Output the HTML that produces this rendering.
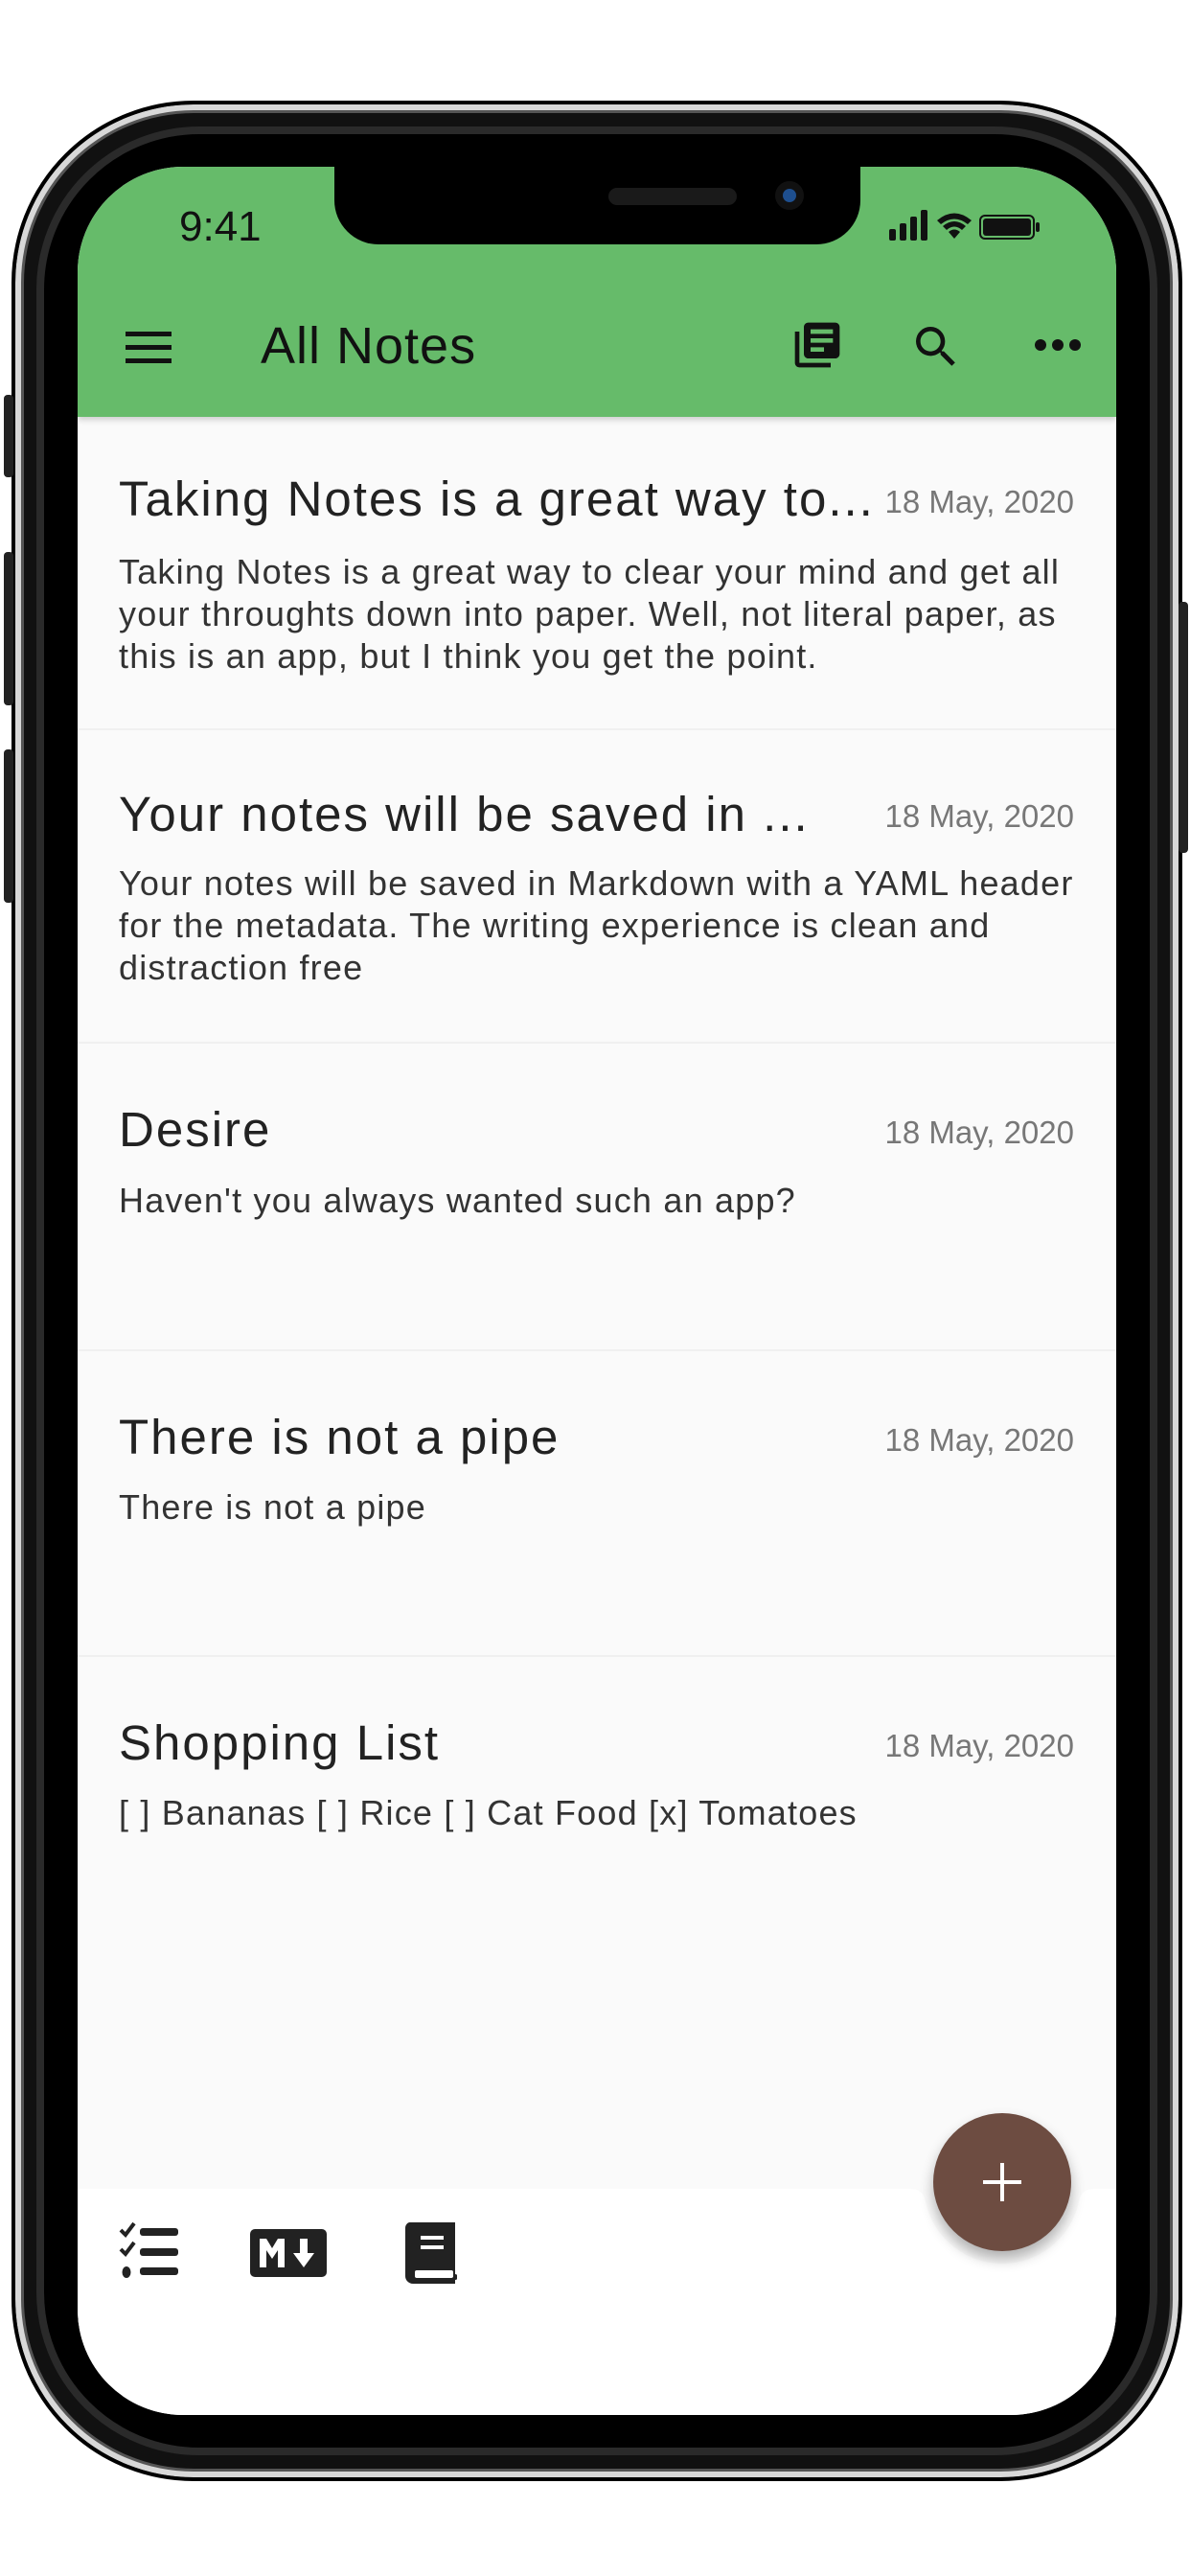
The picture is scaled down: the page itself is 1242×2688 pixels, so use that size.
<!DOCTYPE html>
<html><head><meta charset="utf-8"><style>
*{margin:0;padding:0;box-sizing:border-box}
body{width:1242px;height:2688px;background:#fff;position:relative;overflow:hidden;font-family:"Liberation Sans",sans-serif}
.abs{position:absolute}
.rim{left:12px;top:105px;width:1222px;height:2484px;border-radius:190px;background:#111;border:4px solid #000;box-shadow:inset 0 0 0 6px #d8d8d8,inset 0 0 0 9px #555}
.bez{left:38px;top:132px;width:1170px;height:2430px;border-radius:170px;background:#000;border:8px solid #2a2a2a}
.screen{left:81px;top:174px;width:1084px;height:2346px;border-radius:110px;background:#fafafa;overflow:hidden}
.bar{left:0;top:0;width:1084px;height:261px;background:#66bb6a;box-shadow:0 3px 6px rgba(0,0,0,.18)}
.notch{left:268px;top:0;width:549px;height:81px;background:#000;border-radius:0 0 46px 46px}
.item{left:0;width:1084px;border-bottom:2px solid #f0f0f0}
.t{position:absolute;left:43px;font-size:51px;letter-spacing:2px;color:#222;white-space:nowrap}
.d{position:absolute;right:44px;font-size:33px;color:#777;white-space:nowrap}
.b{position:absolute;left:43px;font-size:36px;letter-spacing:1.2px;color:#333;line-height:44px;white-space:nowrap}
.btn{background:#222;border-radius:4px}
</style></head><body>
<div class="abs rim"></div>
<div class="abs btn" style="left:4px;top:412px;width:10px;height:86px"></div>
<div class="abs btn" style="left:4px;top:576px;width:10px;height:160px"></div>
<div class="abs btn" style="left:4px;top:782px;width:10px;height:160px"></div>
<div class="abs btn" style="left:1230px;top:628px;width:10px;height:262px"></div>
<div class="abs bez"></div>
<div class="abs screen">
  <div class="abs bar"></div>
  <div class="abs notch">
    <div class="abs" style="left:286px;top:22px;width:134px;height:18px;border-radius:9px;background:#1a1a1a"></div>
    <div class="abs" style="left:460px;top:15px;width:30px;height:30px;border-radius:50%;background:#111"><div style="margin:8px;width:14px;height:14px;border-radius:50%;background:#1e4f8f"></div></div>
  </div>
  <div class="abs" style="left:106px;top:38px;font-size:44px;color:#111">9:41</div>
  <svg class="abs" style="left:845px;top:43px" width="180" height="36" viewBox="0 0 180 36">
    <rect x="2" y="22" width="7" height="12" rx="2" fill="#111"/><rect x="13" y="16" width="7" height="18" rx="2" fill="#111"/><rect x="24" y="9" width="7" height="25" rx="2" fill="#111"/><rect x="35" y="2" width="7" height="32" rx="2" fill="#111"/>
    <path d="M52 13 Q70 -2 88 13 L84 17 Q70 6 56 17Z M58 19 Q70 9 82 19 L78 23 Q70 16 62 23Z M64 25 Q70 20 76 25 L70 32Z" fill="#111"/>
    <rect x="97" y="8" width="56" height="24" rx="5" fill="none" stroke="#111" stroke-width="2"/><rect x="100" y="11" width="50" height="18" rx="3" fill="#111"/><rect x="155" y="15" width="4" height="10" rx="2" fill="#111"/>
  </svg>
  <svg class="abs" style="left:50px;top:170px" width="50" height="38"><rect y="2" width="48" height="5" fill="#111"/><rect y="16" width="48" height="5" fill="#111"/><rect y="30" width="48" height="5" fill="#111"/></svg>
  <div class="abs" style="left:191px;top:156px;font-size:54px;letter-spacing:1px;color:#111">All Notes</div>
  <svg class="abs" style="left:744px;top:158px" width="56" height="56" viewBox="0 0 24 24"><path fill="#111" d="M4 6H2v14c0 1.1.9 2 2 2h14v-2H4V6zm16-4H8c-1.1 0-2 .9-2 2v12c0 1.1.9 2 2 2h12c1.1 0 2-.9 2-2V4c0-1.1-.9-2-2-2zm-1 9H9V9h10v2zm-4 4H9v-2h6v2zm4-8H9V5h10v2z"/></svg>
  <svg class="abs" style="left:868px;top:160px" width="56" height="56" viewBox="0 0 24 24"><path fill="#111" d="M15.5 14h-.79l-.28-.27A6.47 6.47 0 0 0 16 9.5 6.5 6.5 0 1 0 9.5 16c1.61 0 3.09-.59 4.23-1.57l.27.28v.79l5 4.99L20.49 19l-4.99-5zm-6 0C7.01 14 5 11.990 5 9.5S7.01 5 9.5 5 14 7.01 14 9.5 11.99 14 9.5 14z"/></svg>
  <svg class="abs" style="left:999px;top:179px" width="48" height="14"><circle cx="6" cy="7" r="6" fill="#111"/><circle cx="24" cy="7" r="6" fill="#111"/><circle cx="42" cy="7" r="6" fill="#111"/></svg>

  <div class="abs item" style="top:261px;height:327px">
    <div class="t" style="top:56px">Taking Notes is a great way to...</div><div class="d" style="top:70px">18 May, 2020</div>
    <div class="b" style="top:140px">Taking Notes is a great way to clear your mind and get all<br>your throughts down into paper. Well, not literal paper, as<br>this is an app, but I think you get the point.</div>
  </div>
  <div class="abs item" style="top:588px;height:327px">
    <div class="t" style="top:58px">Your notes will be saved in ...</div><div class="d" style="top:71px">18 May, 2020</div>
    <div class="b" style="top:138px">Your notes will be saved in Markdown with a YAML header<br>for the metadata. The writing experience is clean and<br>distraction free</div>
  </div>
  <div class="abs item" style="top:915px;height:321px">
    <div class="t" style="top:60px">Desire</div><div class="d" style="top:74px">18 May, 2020</div>
    <div class="b" style="top:142px">Haven't you always wanted such an app?</div>
  </div>
  <div class="abs item" style="top:1236px;height:319px">
    <div class="t" style="top:60px">There is not a pipe</div><div class="d" style="top:74px">18 May, 2020</div>
    <div class="b" style="top:141px">There is not a pipe</div>
  </div>
  <div class="abs item" style="top:1555px;height:319px;border:none">
    <div class="t" style="top:60px">Shopping List</div><div class="d" style="top:74px">18 May, 2020</div>
    <div class="b" style="top:141px">[ ] Bananas [ ] Rice [ ] Cat Food [x] Tomatoes</div>
  </div>

  <svg class="abs" style="left:0;top:2100px" width="1084" height="246">
    <path d="M0 10 Q0 10 10 10 L869 10 Q883 10 885 24 A82 82 0 0 0 1045 24 Q1047 10 1061 10 L1084 10 L1084 246 L0 246Z" fill="#fff"/>
  </svg>
  <div class="abs" style="left:893px;top:2031px;width:144px;height:144px;border-radius:50%;background:#6d4c41;box-shadow:0 8px 14px rgba(0,0,0,.3)">
    <div class="abs" style="left:52px;top:70px;width:40px;height:4px;background:#fff"></div>
    <div class="abs" style="left:70px;top:52px;width:4px;height:40px;background:#fff"></div>
  </div>
  <svg class="abs" style="left:43px;top:2145px" width="64" height="60" viewBox="0 0 64 60">
    <path d="M2 8 l5 5 l9 -12" stroke="#222" stroke-width="4" fill="none"/><rect x="22" y="6" width="40" height="8" rx="3" fill="#222"/>
    <path d="M2 28 l5 5 l9 -12" stroke="#222" stroke-width="4" fill="none"/><rect x="22" y="27" width="40" height="8" rx="3" fill="#222"/>
    <ellipse cx="8" cy="52" rx="4.5" ry="6" fill="#222"/><rect x="22" y="47" width="40" height="8" rx="3" fill="#222"/>
  </svg>
  <svg class="abs" style="left:180px;top:2152px" width="80" height="50" viewBox="0 0 80 50">
    <rect width="80" height="50" rx="5" fill="#222"/>
    <path d="M10 40V10h7l6 10 6-10h7v30h-7V22l-6 9-6-9v18z" fill="#fff"/>
    <path d="M52 10h8v15h7L56 40 45 25h7z" fill="#fff"/>
  </svg>
  <svg class="abs" style="left:340px;top:2145px" width="56" height="64" viewBox="0 0 56 64">
    <path d="M6 0H54V54a3 3 0 0 1 0 6V64H10A8 8 0 0 1 2 56V6A6 6 0 0 1 6 0Z" fill="#222"/>
    <rect x="12" y="50" width="40" height="8" rx="2" fill="#fff"/>
    <rect x="18" y="14" width="24" height="4" fill="#fff"/><rect x="18" y="24" width="24" height="4" fill="#fff"/>
  </svg>
</div>
</body></html>
